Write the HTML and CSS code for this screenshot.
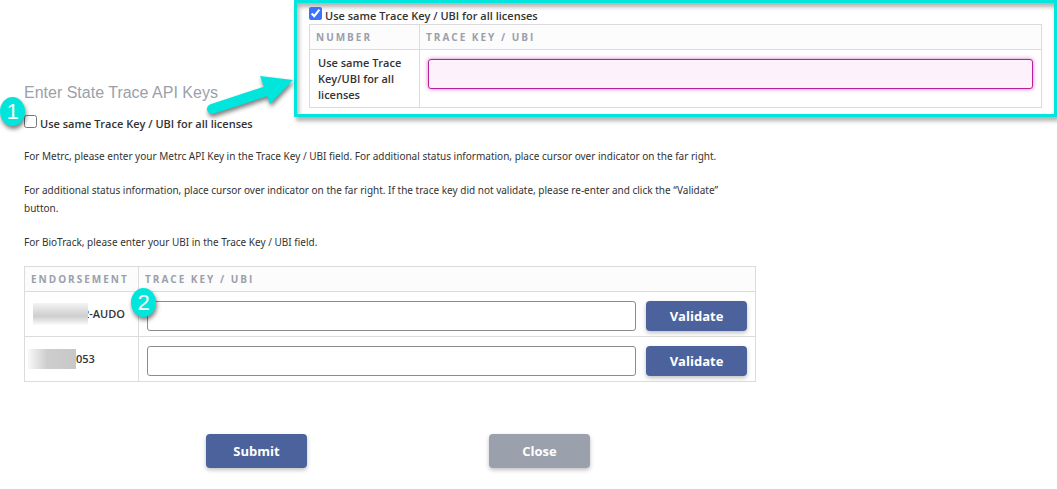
FILE: index.html
```html
<!DOCTYPE html>
<html lang="en">
<head>
    <meta charset="UTF-8">
    <meta name="viewport" content="width=device-width, initial-scale=1.0">
    <title>State Trace API Keys</title>
    <link rel="stylesheet" href="styles.css">
</head>
<body>

    <form class="keys-form">
        <h1>Enter State Trace API Keys</h1>

        <div class="same-key">
            <input type="checkbox" id="sameKey">
            <label for="sameKey">Use same Trace Key / UBI for all licenses</label>
        </div>

        <div class="info">
            <p>For Metrc, please enter your Metrc API Key in the Trace Key / UBI field. For additional status information, place cursor over indicator on the far right.</p>
            <p>For additional status information, place cursor over indicator on the far right. If the trace key did not validate, please re-enter and click the “Validate” button.</p>
            <p>For BioTrack, please enter your UBI in the Trace Key / UBI field.</p>
        </div>

        <table class="keys-table">
            <thead>
                <tr>
                    <th class="col-endorsement">Endorsement</th>
                    <th>Trace Key / UBI</th>
                </tr>
            </thead>
            <tbody>
                <tr>
                    <td><label for="key1" class="license"><span class="masked"></span>2-AUDO</label></td>
                    <td>
                        <div class="key-row">
                            <input type="text" id="key1" class="key-input">
                            <button type="button" class="btn btn-validate">Validate</button>
                        </div>
                    </td>
                </tr>
                <tr>
                    <td><label for="key2" class="license"><span class="masked masked-short"></span>053</label></td>
                    <td>
                        <div class="key-row">
                            <input type="text" id="key2" class="key-input">
                            <button type="button" class="btn btn-validate">Validate</button>
                        </div>
                    </td>
                </tr>
            </tbody>
        </table>

        <div class="actions">
            <button type="submit" class="btn">Submit</button>
            <button type="button" class="btn btn-close">Close</button>
        </div>
    </form>

    <!-- Callout: what the form shows once the box is ticked -->
    <section class="callout">
        <div class="same-key">
            <input type="checkbox" id="sameKeyOn" checked>
            <label for="sameKeyOn">Use same Trace Key / UBI for all licenses</label>
        </div>
        <table class="keys-table">
            <thead>
                <tr>
                    <th class="col-number">Number</th>
                    <th>Trace Key / UBI</th>
                </tr>
            </thead>
            <tbody>
                <tr>
                    <td><label for="keyAll">Use same Trace Key/UBI for all licenses</label></td>
                    <td class="key-cell"><input type="text" id="keyAll" class="key-input key-active"></td>
                </tr>
            </tbody>
        </table>
    </section>

    <!-- Step markers -->
    <span class="step step-1">1</span>
    <span class="step step-2">2</span>
    <svg class="arrow" width="100" height="50" viewBox="0 0 100 50">
        <path d="M10 36 L68 17" stroke="#00e6dc" stroke-width="10" stroke-linecap="round"/>
        <path d="M58 3 L91 7 L68 31 L64 20 Z" fill="#00e6dc"/>
    </svg>

</body>
</html>
```

FILE: styles.css
```css
* {
    box-sizing: border-box;
}

body {
    margin: 0;
    position: relative;
    background: #fff;
    color: #333;
    font-family: "Open Sans", sans-serif;
    font-size: 11px;
    font-weight: 600;
}

.keys-form {
    max-width: 756px;
    padding: 83px 0 20px 24px;
}

h1 {
    margin: 0 0 11px;
    color: #9b9fab;
    font-family: "Liberation Sans", Arial, sans-serif;
    font-size: 16px;
    font-weight: normal;
    line-height: 20px;
}

.same-key {
    display: flex;
    align-items: flex-start;
    gap: 3px;
    line-height: 16px;
}

.same-key input {
    width: 13px;
    height: 13px;
    margin: 1px 0 0;
    accent-color: #3b71fe;
}

.same-key label {
    padding-top: 2px;
}

.info {
    max-width: 720px;
    margin: 15px 0 14px;
    font-family: "Noto Sans", "Open Sans", sans-serif;
    font-size: 10px;
    font-weight: normal;
    line-height: 18px;
}

.info p {
    margin: 0 0 16px;
}

/* the last paragraph's margin would merge with the block's own */
.info p:last-child {
    margin-bottom: 15px;
}

.keys-table {
    width: 100%;
    border-collapse: collapse;
}

.keys-table th,
.keys-table td {
    border: 1px solid #dcdcdc;
    text-align: left;
}

.keys-table th {
    height: 25px;
    padding: 0 6px;
    background: #fcfcfc;
    color: #9b9fab;
    font-size: 10px;
    font-weight: 700;
    letter-spacing: 2px;
    text-transform: uppercase;
    white-space: nowrap;
}

.keys-table td {
    height: 45px;
    padding: 0 8px;
    line-height: 16px;
}

.keys-table .col-endorsement {
    width: 114px;
    padding-right: 0;
}

.col-number {
    width: 110px;
}

.license {
    display: flex;
    align-items: center;
    white-space: nowrap;
}

/* the mask runs over the start of the visible characters */
.masked {
    z-index: 1;
    width: 55px;
    height: 22px;
    margin-right: -5px;
    background: linear-gradient(#f4f4f4, #cdcdcd 60%, #fcfcfc);
}

.masked-short {
    width: 48px;
    height: 20px;
    margin: 0 0 0 -5px;
    background: linear-gradient(90deg, #f8f8f8, #cdcdcd 40%, #c8c8c8);
}

.key-row {
    display: flex;
    gap: 10px;
    padding-top: 4px;
}

.key-input {
    flex: 1;
    min-width: 0;
    height: 30px;
    padding: 0 8px;
    border: 1px solid #8c8c8c;
    border-radius: 3px;
    font: inherit;
}

.btn {
    width: 101px;
    height: 34px;
    padding: 0;
    border: none;
    border-radius: 4px;
    background: #4b629c;
    box-shadow: 0 2px 4px rgba(0, 0, 0, 0.25);
    color: #fff;
    cursor: pointer;
    font: bold 13px "Open Sans", sans-serif;
}

.btn-validate {
    height: 30px;
}

.btn-close {
    background: #9aa0ac;
}

.actions {
    display: flex;
    justify-content: center;
    gap: 182px;
    margin-top: 52px;
    padding-left: 16px;
}

/* callout laid over the form */
.callout {
    position: absolute;
    top: 0;
    left: 294px;
    right: 0;
    padding: 3px 12px 6px;
    border: 3px solid #00e6dc;
    box-shadow: 2px 4px 4px rgba(0, 0, 0, 0.3), inset 2px 4px 4px rgba(0, 0, 0, 0.3);
}

.callout td {
    height: 58px;
}

.callout .key-cell {
    padding-bottom: 10px;
}

.key-active {
    width: 100%;
    border-color: #b8209c;
    background: #fdf2fb;
    box-shadow: 0 0 4px rgba(184, 32, 156, 0.6);
}

.step {
    position: absolute;
    width: 25px;
    height: 29px;
    border-radius: 50%;
    background: #00e6dc;
    box-shadow: 1px 3px 4px rgba(0, 0, 0, 0.5);
    color: #fff;
    font: 22px/29px "Liberation Sans", Arial, sans-serif;
    text-align: center;
}

.step-1 {
    top: 97px;
    left: 0;
}

.step-2 {
    top: 288px;
    left: 131px;
}

.arrow {
    position: absolute;
    top: 73px;
    left: 202px;
    overflow: visible;
    filter: drop-shadow(1px 3px 2px rgba(0, 0, 0, 0.5));
}
```
